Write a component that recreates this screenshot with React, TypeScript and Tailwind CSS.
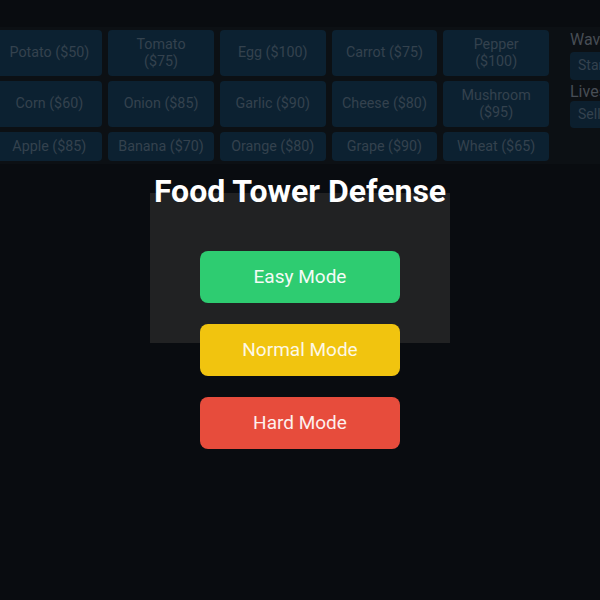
import React from "react";

const towers = [
  "Potato ($50)",
  "Tomato ($75)",
  "Egg ($100)",
  "Carrot ($75)",
  "Pepper ($100)",
  "Corn ($60)",
  "Onion ($85)",
  "Garlic ($90)",
  "Cheese ($80)",
  "Mushroom ($95)",
  "Apple ($85)",
  "Banana ($70)",
  "Orange ($80)",
  "Grape ($90)",
  "Wheat ($65)",
];

export default function App() {
  return (
    <div
      className="relative w-[600px] h-[600px] overflow-hidden bg-[#090c10]"
      style={{ fontFamily: "Roboto, 'Noto Sans', sans-serif" }}
    >
      <div className="pt-[27px]">
        <div className="flex gap-[21px] ml-[-3.5px] w-[640px] bg-[#0c1014] pt-[2.5px] pb-[3.5px]">
          <div className="grid grid-cols-5 gap-x-[6px] gap-y-[5px] w-[552.5px] shrink-0">
            {towers.map((t) => (
              <div
                key={t}
                className="flex items-center justify-center text-center rounded-[4px] bg-[#0c2131] text-[#34424e] text-[14.3px] leading-[17px] py-[6px] px-[10px]"
              >
                {t}
              </div>
            ))}
          </div>
          <div className="flex flex-col w-[80px] shrink-0">
            <div className="text-[16px] leading-[19px] text-[#474d55] whitespace-nowrap">Wave: 1</div>
            <div className="mt-[3px] h-[28px] rounded-[4px] bg-[#0c1f2e] text-[#34424e] text-[14px] flex items-center px-[8px] whitespace-nowrap">
              Start Wave
            </div>
            <div className="mt-[2px] text-[16px] leading-[19px] text-[#474d55] whitespace-nowrap">Lives: 20</div>
            <div className="h-[27px] rounded-[4px] bg-[#0c1f2e] text-[#34424e] text-[14px] flex items-center px-[8px] whitespace-nowrap">
              Sell Tower
            </div>
          </div>
        </div>
        <div className="mx-auto mt-[29px] w-[300px] h-[150px] bg-[#212223]" />
      </div>

      <div className="absolute inset-0 flex flex-col items-center pt-[172px]">
        <h1 className="text-white font-bold text-[32px] leading-[38px]">Food Tower Defense</h1>
        <button className="mt-[41px] w-[200px] h-[52px] rounded-[8px] bg-[#2ecc71] text-[#f4fbf6] text-[19px]">
          Easy Mode
        </button>
        <button className="mt-[21px] w-[200px] h-[52px] rounded-[8px] bg-[#f1c40f] text-[#fdf8e6] text-[19px]">
          Normal Mode
        </button>
        <button className="mt-[21px] w-[200px] h-[52px] rounded-[8px] bg-[#e74c3c] text-[#fdf0ee] text-[19px]">
          Hard Mode
        </button>
      </div>
    </div>
  );
}
